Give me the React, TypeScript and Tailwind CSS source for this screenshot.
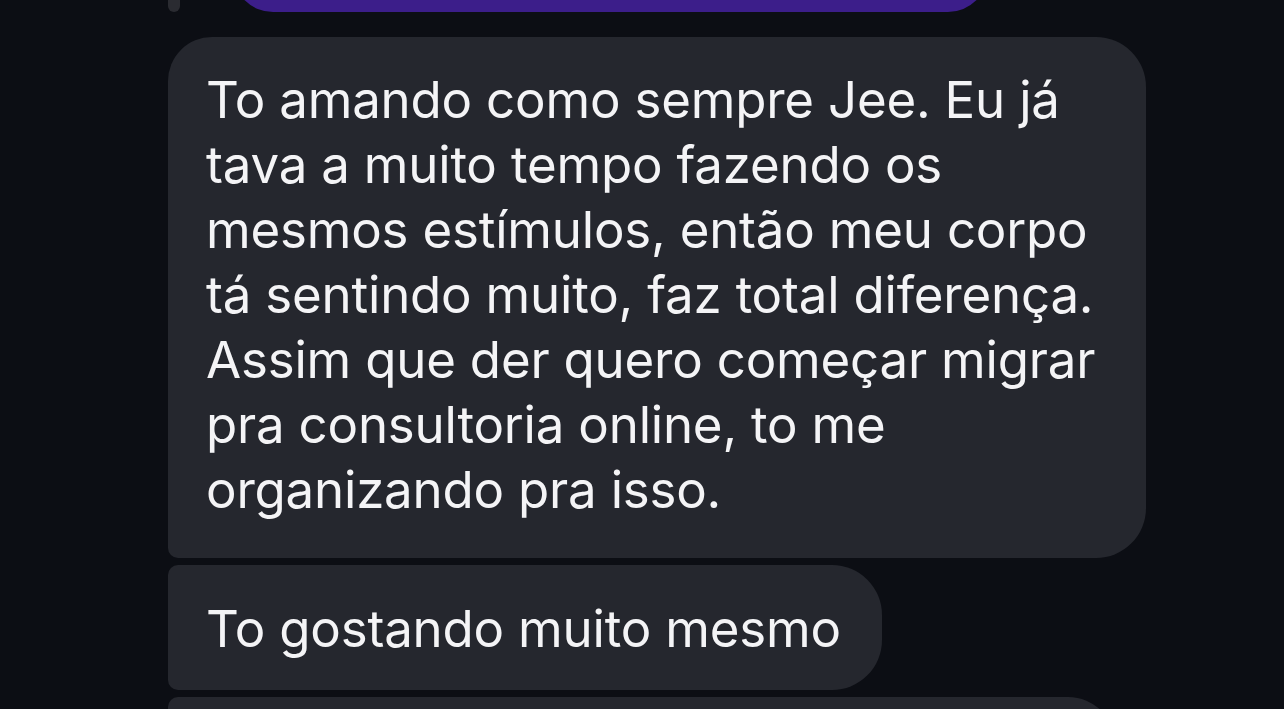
import React from "react";

const lines = [
  "To amando como sempre Jee. Eu já",
  "tava a muito tempo fazendo os",
  "mesmos estímulos, então meu corpo",
  "tá sentindo muito, faz total diferença.",
  "Assim que der quero começar migrar",
  "pra consultoria online, to me",
  "organizando pra isso.",
];

export default function App() {
  return (
    <div
      className="w-[1284px] h-[709px] overflow-hidden bg-[#0c0e14] text-[#f4f4f6]"
      style={{ fontFamily: "Inter, 'Noto Sans', sans-serif" }}
    >
      <div className="pl-[168px] flex items-start">
        <div className="w-[12px] h-[12px] overflow-hidden">
          <div className="w-[12px] h-[30px] -mt-[18px] rounded-full bg-[#2a2b31]" />
        </div>
        <div className="ml-[53px] w-[755px] h-[12px] overflow-hidden">
          <div className="w-[755px] h-[80px] -mt-[68px] rounded-[42px] bg-[#3c1e8a]" />
        </div>
      </div>

      <div className="pl-[168px] mt-[25px] flex flex-col gap-[7px]">
        <div className="w-[978px] h-[521px] bg-[#25272e] rounded-tl-[44px] rounded-tr-[50px] rounded-br-[50px] rounded-bl-[10px] pl-[38px] pt-[30px] text-[51px] leading-[65px] tracking-[-0.2px]">
          {lines.map((l) => (
            <div key={l} className="whitespace-nowrap">
              {l}
            </div>
          ))}
        </div>
        <div className="w-[714px] h-[125px] bg-[#25272e] rounded-tl-[10px] rounded-bl-[10px] rounded-tr-[50px] rounded-br-[50px] pl-[38px] pt-[31px] text-[51px] leading-[65px] tracking-[-0.2px] whitespace-nowrap">
          To gostando muito mesmo
        </div>
        <div className="w-[948px] h-[125px] bg-[#25272e] rounded-tl-[10px] rounded-tr-[48px]" />
      </div>
    </div>
  );
}
